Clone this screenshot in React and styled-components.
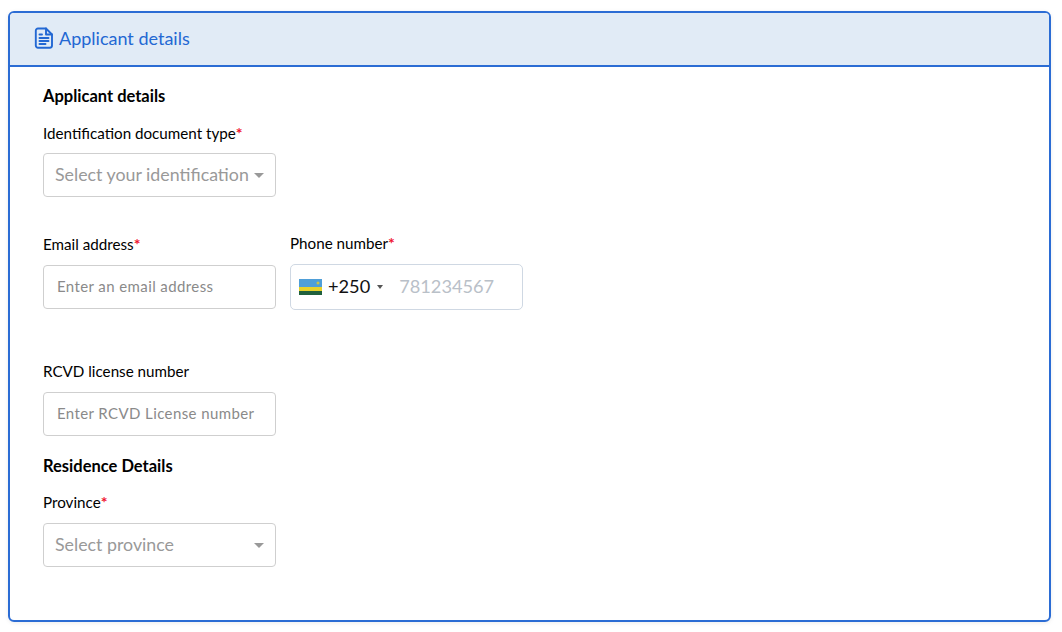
import React from "react";
import styled, { createGlobalStyle } from "styled-components";

const Global = createGlobalStyle`
  html, body { margin: 0; padding: 0; background: #fff; }
  body { font-family: Lato, "Noto Sans", "Liberation Sans", sans-serif; color: #000; }
`;
const Page = styled.div`
  width: 1062px; height: 632px; box-sizing: border-box; padding: 11px 11px 10px 8px;
`;
const Card = styled.section`
  height: 100%; box-sizing: border-box; border: 2px solid #2b6cd4; border-radius: 6px; overflow: hidden;
  box-shadow: 0 1px 4px rgba(0,0,0,.08);
`;
const CardHeader = styled.header`
  height: 54px; box-sizing: border-box; display: flex; align-items: center; gap: 5px; padding: 0 0 2px 24px;
  background: #e1ebf6; border-bottom: 2px solid #2b6cd4; color: #2368d3; font-size: 18px;
`;
const Body = styled.div`
  padding: 19px 0 0 33px; display: flex; flex-direction: column; align-items: flex-start;
`;
const SectionTitle = styled.h3`
  margin: ${p => p.$top || 0}px 0 0; font-size: 16.5px; line-height: 20px; font-weight: 700;
`;
const Row = styled.div`
  display: flex; gap: 14px; align-items: flex-start; margin-top: ${p => p.$top || 0}px;
`;
const Field = styled.div`
  width: ${p => p.$w || 233}px; margin-top: ${p => p.$top || 0}px;
`;
const Label = styled.label`
  display: block; font-size: 15.2px; line-height: 20px; height: 20px; margin-bottom: ${p => p.$gap ?? 11}px;
  white-space: nowrap;
  em { color: #f0142f; font-style: normal; font-size: 16px; font-weight: 700; }
`;
const SelectBox = styled.div`
  height: 44px; box-sizing: border-box; border: 1px solid #cfcfcf; border-radius: 4px; background: #fff;
  display: flex; align-items: center; justify-content: space-between; padding: 0 11px 3px 11px;
  color: #999; font-size: 17.8px; white-space: nowrap;
`;
const Caret = styled.i`
  width: 0; height: 0; flex: none; margin-top: 3px; border-left: 5.5px solid transparent; border-right: 5.5px solid transparent;
  border-top: 5.5px solid #999;
`;
const InputBox = styled.div`
  height: 44px; box-sizing: border-box; border: 1px solid #cfcfcf; border-radius: 4px; background: #fff;
  display: flex; align-items: center; padding: 0 13px 2px; color: #8a8a8a; font-size: 15px; letter-spacing: .4px; white-space: nowrap;
`;
const PhoneBox = styled.div`
  height: 46px; box-sizing: border-box; border: 1px solid #cfd8e3; border-radius: 5px; background: #fff;
  display: flex; align-items: center; padding: 0 0 1px 8px; font-size: 18.2px;
`;
const PhoneField = styled(Field)`
  margin-top: -1px;
`;
const Code = styled.span`
  margin-left: 6px; margin-bottom: 2px; color: #111;
`;
const SmallCaret = styled.i`
  width: 0; height: 0; margin-left: 7px; border-left: 3.5px solid transparent; border-right: 3.5px solid transparent;
  border-top: 4px solid #555;
`;
const PhoneHint = styled.span`
  margin-left: 16px; margin-bottom: 2px; color: #b9c0c8;
`;

const DocIcon = () => (
  <svg width="20" height="22" viewBox="0 0 20 22" fill="none" stroke="#2368d3" strokeWidth="1.9" strokeLinejoin="round" strokeLinecap="round">
    <path d="M4 1.500h8l6 6v11a2.200 2.200 0 0 1-2.200 2.200H4A2.200 2.200 0 0 1 1.800 18.500V3.700A2.200 2.200 0 0 1 4 1.500z" />
    <path d="M12 1.500v6h6" />
    <path d="M5.500 11h9M5.500 14h9M5.500 17h6M5.500 7.500h2.500" />
  </svg>
);
const Flag = () => (
  <svg width="23" height="16" viewBox="0 0 23 16">
    <rect width="23" height="16" fill="#20603d" />
    <rect width="23" height="12" fill="#e8d22a" />
    <rect width="23" height="8" fill="#4f9fd8" />
    <circle cx="19" cy="4" r="1.500" fill="#c9c24a" />
  </svg>
);

export default function App() {
  return (
    <Page>
      <Global />
      <Card>
        <CardHeader><DocIcon />Applicant details</CardHeader>
        <Body>
          <SectionTitle>Applicant details</SectionTitle>
          <Field $top={17}>
            <Label $gap={10}>Identification document type<em>*</em></Label>
            <SelectBox>Select your identification<Caret /></SelectBox>
          </Field>
          <Row $top={37}>
            <Field>
              <Label>Email address<em>*</em></Label>
              <InputBox>Enter an email address</InputBox>
            </Field>
            <PhoneField>
              <Label>Phone number<em>*</em></Label>
              <PhoneBox><Flag /><Code>+250</Code><SmallCaret /><PhoneHint>781234567</PhoneHint></PhoneBox>
            </PhoneField>
          </Row>
          <Field $top={51}>
            <Label>RCVD license number</Label>
            <InputBox>Enter RCVD License number</InputBox>
          </Field>
          <SectionTitle $top={20}>Residence Details</SectionTitle>
          <Field $top={16}>
            <Label>Province<em>*</em></Label>
            <SelectBox>Select province<Caret /></SelectBox>
          </Field>
        </Body>
      </Card>
    </Page>
  );
}
